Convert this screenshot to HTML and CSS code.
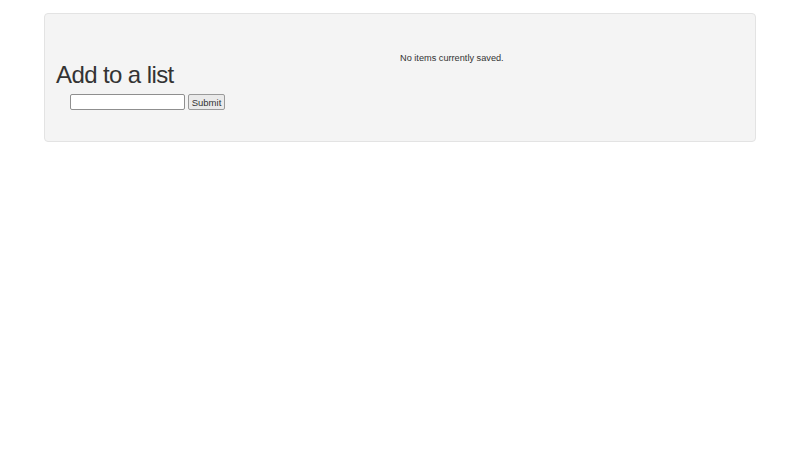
FILE: index.html
```html
<!DOCTYPE html>
<html lang="en">
<head>
    <meta charset="UTF-8">
    <meta name="viewport" content="width=device-width, initial-scale=1.0">
    <title>List</title>
    <link rel="stylesheet" href="styles.css">
</head>
<body>
    <div class="container">
        <div class="well">
            <div class="col">
                <h1>Add to a list</h1>
                <form class="add-form">
                    <input type="text" name="item">
                    <button type="submit">Submit</button>
                </form>
            </div>
            <div class="col">
                <p class="empty">No items currently saved.</p>
            </div>
        </div>
    </div>
</body>
</html>
```

FILE: styles.css
```css
body {
    font-family: "Liberation Sans", Arial, sans-serif;
    font-size: 12px;
    color: #333;
    margin: 0;
}
.container {
    width: 712px;
    margin: 13px auto 0;
}
.well {
    display: flex;
    background-color: #f4f4f4;
    border: 1px solid #e3e3e3;
    border-radius: 4px;
    padding: 19px 11px 31px;
}
.col {
    flex: 1;
}
h1 {
    font-size: 24px;
    font-weight: normal;
    letter-spacing: -0.6px;
    margin: 29px 0 6px;
    line-height: 26px;
}
.add-form {
    margin: 0 0 0 14px;
    display: flex;
    gap: 3px;
}
.add-form input {
    box-sizing: border-box;
    width: 115px;
    height: 16px;
    font-size: 9px;
    border: 1px solid #8f8f8f;
    border-radius: 2px;
    padding: 1px 2px;
    background: #fff;
}
.add-form button {
    box-sizing: border-box;
    font-family: "Liberation Sans", Arial, sans-serif;
    font-size: 9.5px;
    width: 37px;
    height: 16px;
    padding: 0;
    border: 1px solid #9a9a9a;
    border-radius: 2px;
    background: #eaeaea;
    color: #333;
}
.empty {
    margin: 18px 0 0;
    line-height: 14px;
    font-size: 9.2px;
}
```
